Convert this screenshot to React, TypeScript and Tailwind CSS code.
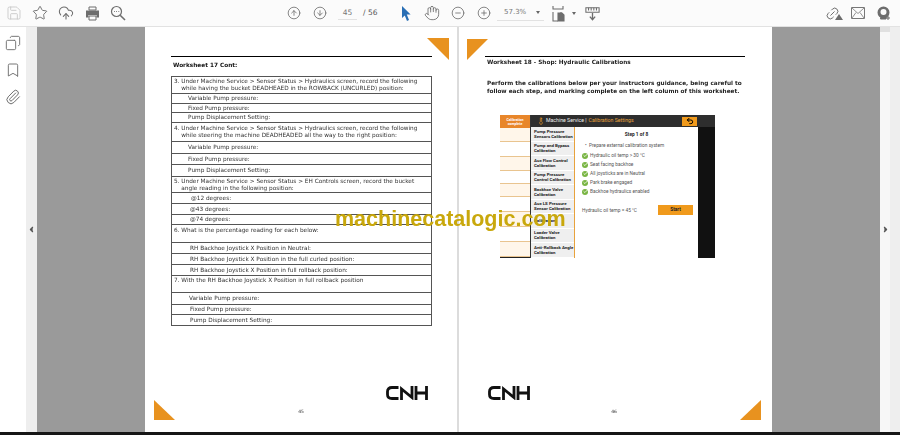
import React from 'react';
import {
  Save, Star, CloudUpload, CircleArrowUp, CircleArrowDown, Hand, CircleMinus, CirclePlus,
  Copy, Bookmark, Paperclip, ChevronLeft, ChevronRight, Link2, Check, Undo2, Thermometer,
} from 'lucide-react';

const LEFT_ROWS = [
  { h: 'h-[17px]', cls: 'pl-[2px]', lines: ['3. Under Machine Service > Sensor Status > Hydraulics screen, record the following', '    while having the bucket DEADHEAED in the ROWBACK (UNCURLED) position:'] },
  { h: 'h-[10px]', cls: 'pl-[16px]', lines: ['Variable Pump pressure:'] },
  { h: 'h-[9px]', cls: 'pl-[16px]', lines: ['Fixed Pump pressure:'] },
  { h: 'h-[10px]', cls: 'pl-[16px]', lines: ['Pump Displacement Setting:'] },
  { h: 'h-[19px]', cls: 'pl-[2px]', lines: ['4. Under Machine Service > Sensor Status > Hydraulics screen, record the following', '    while steering the machine DEADHEADED all the way to the right position:'] },
  { h: 'h-[12px]', cls: 'pl-[16px]', lines: ['Variable Pump pressure:'] },
  { h: 'h-[11px]', cls: 'pl-[16px]', lines: ['Fixed Pump pressure:'] },
  { h: 'h-[12px]', cls: 'pl-[16px]', lines: ['Pump Displacement Setting:'] },
  { h: 'h-[16px]', cls: 'pl-[2px]', lines: ['5. Under Machine Service > Sensor Status > EH Controls screen, record the bucket', '    angle reading in the following position:'] },
  { h: 'h-[11px]', cls: 'pl-[19px]', lines: ['@12 degrees:'] },
  { h: 'h-[11px]', cls: 'pl-[18px]', lines: ['@43 degrees:'] },
  { h: 'h-[10px]', cls: 'pl-[18px]', lines: ['@74 degrees:'] },
  { h: 'h-[18px]', cls: 'pl-[2px]', lines: ['6. What is the percentage reading for each below:', '\u00a0'] },
  { h: 'h-[11px]', cls: 'pl-[18px]', lines: ['RH Backhoe Joystick X Position in Neutral:'] },
  { h: 'h-[11px]', cls: 'pl-[18px]', lines: ['RH Backhoe Joystick X Position in the full curled position:'] },
  { h: 'h-[11px]', cls: 'pl-[18px]', lines: ['RH Backhoe Joystick X Position in full rollback position:'] },
  { h: 'h-[17px]', cls: 'pl-[2px]', lines: ['7. With the RH Backhoe Joystick X Position in full rollback position', '\u00a0'] },
  { h: 'h-[12px]', cls: 'pl-[17px]', lines: ['Variable Pump pressure:'] },
  { h: 'h-[10px]', cls: 'pl-[18px]', lines: ['Fixed Pump pressure:'] },
  { h: 'h-[11px]', cls: 'pl-[18px]', lines: ['Pump Displacement Setting:'] },
];

const COMPLETE_ROWS = [
  'h-[14px] bg-[#fff6ea]',
  'h-[15px] bg-white',
  'h-[14px] bg-[#fff6ea]',
  'h-[13px] bg-white',
  'h-[13px] bg-[#fff6ea]',
  'h-[15px] bg-white',
  'h-[15px] bg-[#fff6ea]',
  'h-[15px] bg-white',
  'h-[15px] bg-[#fff6ea]',
];

const CAL_ITEMS = [
  ['Pump Pressure', 'Sensors Calibration'],
  ['Pump and Bypass', 'Calibration'],
  ['Aux Flow Control', 'Calibration'],
  ['Pump Pressure', 'Control Calibration'],
  ['Backhoe Valve', 'Calibration'],
  ['Aux LS Pressure', 'Sensor Calibration'],
  ['Calibration'],
  ['Loader Valve', 'Calibration'],
  ['Anti-Rollback Angle', 'Calibration'],
];

const CHECKS = ['Hydraulic oil temp > 30 °C', 'Seat facing backhoe', 'All joysticks are in Neutral', 'Park brake engaged', 'Backhoe hydraulics enabled'];

function ToolBtn({ children }: { children: React.ReactNode }) {
  return <div className="flex h-[26px] w-[26px] shrink-0 items-center justify-center text-[#6d6d6d]">{children}</div>;
}

function CnhLogo() {
  return (
    <svg width="42" height="14" viewBox="0 0 42 14" fill="none" stroke="#111" strokeWidth="2.8">
      <path d="M12.5 1.5H6Q1.5 1.5 1.5 5.5V8.5Q1.5 12.5 6 12.5H12.5" />
      <path d="M15.5 14V3L26 11.5V0" />
      <path d="M30 0V14M40.5 0V14M30 7H40.5" />
    </svg>
  );
}

function Corner({ points, className }: { points: string; className: string }) {
  return (
    <svg width="22" height="22" viewBox="0 0 22 22" className={`absolute ${className}`}>
      <polygon points={points} fill="#e8921f" />
    </svg>
  );
}

function Calibration() {
  return (
    <div className="mt-[20px] ml-[15px] flex h-[143px] w-[215px] bg-[#222] font-['Roboto',sans-serif]">
      <div className="flex w-[31px] shrink-0 flex-col border-r border-[#333]">
        <div className="flex h-[13px] flex-col items-center justify-center bg-[#e8862a] text-[3.5px] font-bold leading-[4px] text-white">
          <span>Calibration</span>
          <span>complete</span>
        </div>
        {COMPLETE_ROWS.map((c, i) => (
          <div key={i} className={`${c} border-b border-[#e9c48f]`} />
        ))}
      </div>
      <div className="flex min-w-0 flex-1 flex-col">
        <div className="flex h-[12px] items-center bg-[#2e2e2e] pl-[6px] pr-[18px] text-[5.2px]">
          <Thermometer size={8} className="text-[#e8962a]" />
          <span className="ml-[1px] text-[#eee]">Machine Service |</span>
          <span className="ml-[2px] text-[#e8a23c]">Calibration Settings</span>
          <div className="ml-auto flex h-[9px] w-[15px] items-center justify-center bg-[#f09a1c]">
            <Undo2 size={8} strokeWidth={3} className="text-black" />
          </div>
        </div>
        <div className="flex flex-1">
          <div className="flex w-[44px] shrink-0 flex-col border-r border-[#e8a23c] bg-[#efefef] text-[4.4px] font-bold leading-[5px] text-[#222]">
            {CAL_ITEMS.map((lines, i) => (
              <div key={i} className="flex h-[14.5px] flex-col justify-center border-b border-white pl-[3px]">
                {lines.map(l => <span key={l} className="whitespace-nowrap">{l}</span>)}
              </div>
            ))}
          </div>
          <div className="flex w-[123px] shrink-0 flex-col bg-white pl-[7px] text-[4.8px] leading-[9px] text-[#555]">
            <div className="mt-[3px] pr-[7px] text-center font-bold text-[#222]">Step 1 of 8</div>
            <div className="mt-[2px] mb-[1px] pl-[3px]">• &nbsp;Prepare external calibration system</div>
            {CHECKS.map(t => (
              <div key={t} className="flex h-[9px] items-center gap-[2px]">
                <span className="flex h-[6px] w-[6px] items-center justify-center rounded-full bg-[#79b543]">
                  <Check size={5} strokeWidth={4} className="text-white" />
                </span>
                <span>{t}</span>
              </div>
            ))}
            <div className="mt-[9px] flex items-center pr-[5px]">
              <span>Hydraulic oil temp = 45 °C</span>
              <div className="ml-auto flex h-[10px] w-[35px] items-center justify-center bg-[#f09a1c] font-bold leading-none text-[#222]">Start</div>
            </div>
          </div>
          <div className="flex-1 bg-[#111]" />
        </div>
      </div>
    </div>
  );
}

export default function App() {
  return (
    <div className="relative flex h-[435px] w-[900px] flex-col overflow-hidden bg-white font-['DejaVu_Sans',sans-serif]">
      <header className="flex h-[27px] shrink-0 items-center border-b border-[#e2e2e2] bg-[#fbfbfb] pl-[1px]">
        <ToolBtn><Save size={16} strokeWidth={1.3} className="text-[#c6c6c6]" /></ToolBtn>
        <ToolBtn><Star size={16} strokeWidth={1.4} /></ToolBtn>
        <ToolBtn><CloudUpload size={16} strokeWidth={1.6} /></ToolBtn>
        <ToolBtn>
          <svg width="15" height="15" viewBox="0 0 15 15">
            <path d="M4 1H11V4H4Z" fill="none" stroke="#6d6d6d" />
            <path d="M1 4.5H14V11.5H11.5V9H3.5V11.5H1Z" fill="#6d6d6d" />
            <path d="M4 10H11V14H4Z" fill="none" stroke="#6d6d6d" />
          </svg>
        </ToolBtn>
        <ToolBtn>
          <svg width="16" height="16" viewBox="0 0 16 16" fill="none" stroke="#6d6d6d" strokeWidth="1.2">
            <circle cx="6.5" cy="6.5" r="5" />
            <path d="M10.2 10.2L15 15" strokeWidth="1.6" />
            <path d="M4 6.5H4.8M6.2 6.5H7M8.4 6.5H9.2" />
          </svg>
        </ToolBtn>

        <div className="ml-[150px]"><ToolBtn><CircleArrowUp size={14} strokeWidth={1.4} /></ToolBtn></div>
        <ToolBtn><CircleArrowDown size={14} strokeWidth={1.4} /></ToolBtn>
        <div className="ml-[5px] w-[19px] border-b border-[#e2e2e2] text-center text-[7.5px] leading-[13px] text-[#777]">45</div>
        <div className="ml-[6px] w-[16px] whitespace-nowrap text-[7.5px] text-[#555]">/ 56</div>

        <div className="ml-[14px]">
          <ToolBtn>
            <svg width="10" height="15" viewBox="0 0 10 15"><path d="M1 0V12L3.8 9.4L6 15L8 14L5.8 8.6H9.6Z" fill="#2a6fb5" /></svg>
          </ToolBtn>
        </div>
        <ToolBtn><Hand size={16} strokeWidth={1.3} /></ToolBtn>
        <ToolBtn><CircleMinus size={14} strokeWidth={1.4} /></ToolBtn>
        <ToolBtn><CirclePlus size={14} strokeWidth={1.4} /></ToolBtn>
        <div className="flex h-[15px] w-[47px] items-center justify-between border-b border-[#e2e2e2] pl-[7px] pr-[4px] text-[7px] text-[#777]">
          <span>57.3%</span>
          <span className="h-0 w-0 border-x-[2.5px] border-t-[3px] border-x-transparent border-t-[#666]" />
        </div>
        <div className="ml-[4px]">
          <ToolBtn>
            <svg width="18" height="17" viewBox="0 0 18 17" fill="none" stroke="#6d6d6d" strokeWidth="1.1">
              <path d="M1 1V4H11V1M1 16V13M1 7V16H6M9 7V10" />
              <path d="M6 8H10L12 10V16H6Z" fill="#6d6d6d" />
            </svg>
          </ToolBtn>
        </div>
        <span className="-ml-[2px] h-0 w-0 border-x-[2.5px] border-t-[3px] border-x-transparent border-t-[#666]" />
        <div className="ml-[3px]">
          <ToolBtn>
            <svg width="15" height="15" viewBox="0 0 17 17" fill="none" stroke="#6d6d6d" strokeWidth="1.2">
              <path d="M1 2H16V7H1Z" />
              <path d="M4 2V5M7 2V5M10 2V5M13 2V5" />
              <path d="M8.5 8V15M5.5 12L8.5 15.5L11.5 12" strokeWidth="1.5" />
            </svg>
          </ToolBtn>
        </div>

        <div className="ml-auto flex pr-[3px]">
          <ToolBtn>
            <span className="relative flex">
              <Link2 size={15} strokeWidth={1.5} className="-rotate-45" />
              <span className="absolute right-[-3px] bottom-[1px] h-0 w-0 border-x-[4px] border-b-[6px] border-x-transparent border-b-[#6d6d6d]" />
            </span>
          </ToolBtn>
          <ToolBtn>
            <svg width="14" height="12" viewBox="0 0 14 12" fill="none" stroke="#777" strokeWidth="1">
              <path d="M.5 .5H13.5V11.5H.5Z" />
              <path d="M1 1L7 6.5L13 1M1 11L5 5.5M13 11L9 5.5" strokeWidth=".8" />
            </svg>
          </ToolBtn>
          <ToolBtn>
            <svg width="15" height="15" viewBox="0 0 15 15">
              <path d="M6.5 .5A6 6 0 0 0 6.5 12.5A6 6 0 0 0 6.5 .5ZM6.5 3A3 3 0 0 1 6.5 9A3 3 0 0 1 6.5 3Z" fill="#6d6d6d" fillRule="evenodd" />
              <path d="M3.5 13H9V11H4ZM11 10V14M9 12H13" fill="#6d6d6d" stroke="#6d6d6d" strokeWidth="1" />
            </svg>
          </ToolBtn>
        </div>
      </header>

      <div className="flex min-h-0 flex-1">
        <aside className="flex w-[26px] shrink-0 flex-col items-center gap-[11px] bg-white pt-[8px] text-[#6d6d6d]">
          <Copy size={16} strokeWidth={1.4} className="-scale-x-100" />
          <Bookmark size={16} strokeWidth={1.4} />
          <Paperclip size={16} strokeWidth={1.5} />
        </aside>
        <div className="flex w-[11px] shrink-0 items-center justify-center bg-[#eeeeee] text-[#555]">
          <ChevronLeft size={9} strokeWidth={3} fill="#555" />
        </div>

        <main className="flex min-w-0 flex-1 bg-[#9a9a9a] pl-[108px]">
          {/* left page */}
          <section className="relative flex w-[312px] shrink-0 flex-col bg-white pl-[26px] pr-[25px] pt-[29px] text-[5.78px] text-[#333]">
            <Corner points="0,0 22,0 22,22" className="top-[11px] right-[8px]" />
            <div className="h-[1px] bg-black" />
            <div className="will-change-transform">
              <h2 className="mt-[3px] pl-[2px] font-bold leading-[10px] text-[#111]">Worksheet 17 Cont:</h2>
              <div className="mt-[6px] border border-[#555] border-b-0">
                {LEFT_ROWS.map((row, i) => (
                  <div key={i} className={`${row.h} ${row.cls} flex flex-col justify-center border-b border-[#555] leading-[7px]`}>
                    {row.lines.map((l, j) => (
                      <span key={j} className="whitespace-pre">{l}</span>
                    ))}
                  </div>
                ))}
              </div>
            </div>
            <div className="mt-auto flex justify-end pr-[4px]"><CnhLogo /></div>
            <div className="mb-[17px] mt-[9px] pr-[1px] text-center text-[4.5px] leading-[6px] text-[#333] will-change-transform">45</div>
            <Corner points="0,0 0,20 21,20" className="bottom-[10px] left-[9px]" />
          </section>

          <div className="w-[2px] shrink-0 bg-[#dcdcdc]" />

          {/* right page */}
          <section className="relative flex w-[313px] shrink-0 flex-col bg-white pl-[26px] pr-[27px] pt-[29px] text-[5.75px] text-[#222]">
            <Corner points="0,0 21,0 0,21" className="top-[12px] left-[8px]" />
            <div className="h-[1px] bg-black" />
            <div className="will-change-transform">
              <h2 className="mt-[1px] pl-[2px] font-bold leading-[8px]">Worksheet 18 - Shop: Hydraulic Calibrations</h2>
              <p className="mt-[14px] pl-[2px] font-bold leading-[7.5px] whitespace-nowrap">
                Perform the calibrations below per your instructors guidance, being careful to<br />
                follow each step, and marking complete on the left column of this worksheet.
              </p>
            </div>
            <Calibration />
            <div className="mt-auto flex pl-[3px]"><CnhLogo /></div>
            <div className="mb-[17px] mt-[9px] pr-[2px] text-center text-[4.5px] leading-[6px] text-[#333] will-change-transform">46</div>
            <Corner points="21,0 21,20 0,20" className="bottom-[10px] right-[10px]" />
          </section>
        </main>

        <div className="flex w-[10px] shrink-0 flex-col bg-[#f7f7f7] text-[#555]">
          <div className="h-[5px] bg-[#e0e0e0]" />
          <div className="flex flex-1 items-center justify-center pb-[5px]">
            <ChevronRight size={9} strokeWidth={3} fill="#555" />
          </div>
        </div>
        <div className="w-[10px] shrink-0 bg-[#eeeeee]" />
      </div>

      <div className="h-[3px] shrink-0 bg-[#161616]" />

      <div className="absolute left-[335px] top-[206px] whitespace-nowrap font-['Liberation_Sans',sans-serif] text-[21.5px] font-bold leading-[26px] text-[#c9a80c]">
        machinecatalogic.com
      </div>
    </div>
  );
}
